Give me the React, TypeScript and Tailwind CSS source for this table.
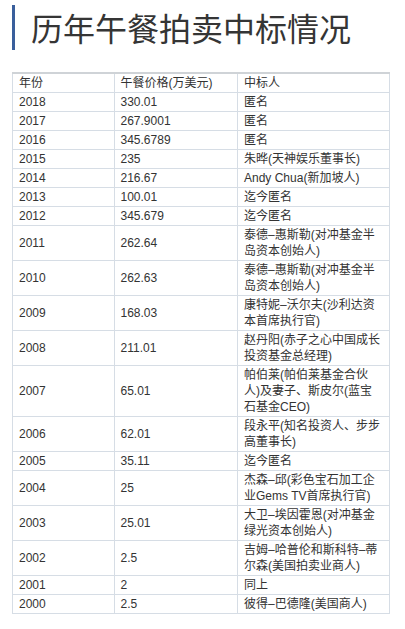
import React from "react";

type Row = { year: string; price: string; winner: string[] };

const rows: Row[] = [
  { year: "2018", price: "330.01", winner: ["匿名"] },
  { year: "2017", price: "267.9001", winner: ["匿名"] },
  { year: "2016", price: "345.6789", winner: ["匿名"] },
  { year: "2015", price: "235", winner: ["朱晔(天神娱乐董事长)"] },
  { year: "2014", price: "216.67", winner: ["Andy Chua(新加坡人)"] },
  { year: "2013", price: "100.01", winner: ["迄今匿名"] },
  { year: "2012", price: "345.679", winner: ["迄今匿名"] },
  { year: "2011", price: "262.64", winner: ["泰德–惠斯勒(对冲基金半", "岛资本创始人)"] },
  { year: "2010", price: "262.63", winner: ["泰德–惠斯勒(对冲基金半", "岛资本创始人)"] },
  { year: "2009", price: "168.03", winner: ["康特妮–沃尔夫(沙利达资", "本首席执行官)"] },
  { year: "2008", price: "211.01", winner: ["赵丹阳(赤子之心中国成长", "投资基金总经理)"] },
  { year: "2007", price: "65.01", winner: ["帕伯莱(帕伯莱基金合伙", "人)及妻子、斯皮尔(蓝宝", "石基金CEO)"] },
  { year: "2006", price: "62.01", winner: ["段永平(知名投资人、步步", "高董事长)"] },
  { year: "2005", price: "35.11", winner: ["迄今匿名"] },
  { year: "2004", price: "25", winner: ["杰森–邱(彩色宝石加工企", "业Gems TV首席执行官)"] },
  { year: "2003", price: "25.01", winner: ["大卫–埃因霍恩(对冲基金", "绿光资本创始人)"] },
  { year: "2002", price: "2.5", winner: ["吉姆–哈普伦和斯科特–蒂", "尔森(美国拍卖业商人)"] },
  { year: "2001", price: "2", winner: ["同上"] },
  { year: "2000", price: "2.5", winner: ["彼得–巴德隆(美国商人)"] },
];

const cell = "border border-[#d6dde5] px-[6px] py-px align-middle leading-[16px]";

export default function App() {
  return (
    <div
      className="w-[405px] h-[629px] bg-white text-[#333333] overflow-hidden"
      style={{ fontFamily: '"Liberation Sans", "Noto Sans CJK SC", sans-serif' }}
    >
      <div className="flex items-center pt-[5px] pl-[12px]">
        <div className="w-[3px] h-[45px] bg-[#3a5f9c]" />
        <h1
          className="ml-[16px] text-[32px] leading-[45px] text-[#353535]"
          style={{ fontFamily: '"Noto Sans CJK SC", sans-serif' }}
        >
          历年午餐拍卖中标情况
        </h1>
      </div>

      <div className="pl-[12px] pt-[22px]">
        <table className="w-[378px] border-collapse text-[12px] border-t-2 border-t-[#cfd3d7]">
          <colgroup>
            <col className="w-[102px]" />
            <col className="w-[124px]" />
            <col className="w-[152px]" />
          </colgroup>
          <thead>
            <tr>
              <td className={cell + " py-[2px]"}>年份</td>
              <td className={cell + " py-[2px]"}>午餐价格(万美元)</td>
              <td className={cell + " py-[2px]"}>中标人</td>
            </tr>
          </thead>
          <tbody>
            {rows.map((r) => (
              <tr key={r.year}>
                <td className={cell}>{r.year}</td>
                <td className={cell}>{r.price}</td>
                <td className={cell + " whitespace-nowrap"}>
                  {r.winner.map((line, i) => (
                    <div key={i}>{line}</div>
                  ))}
                </td>
              </tr>
            ))}
          </tbody>
        </table>
      </div>
    </div>
  );
}
